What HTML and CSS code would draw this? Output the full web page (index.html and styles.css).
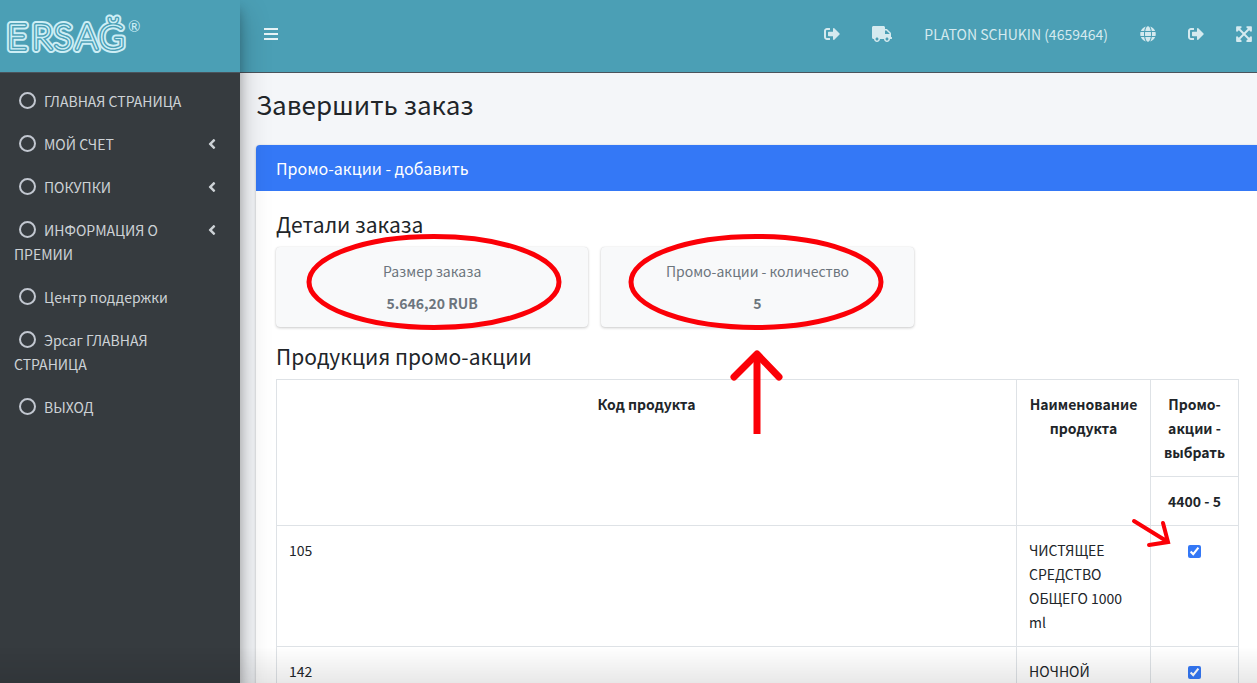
FILE: index.html
```html
<!DOCTYPE html>
<html lang="ru">
<head>
<meta charset="utf-8">
<meta name="viewport" content="width=device-width, initial-scale=1">
<title>Завершить заказ</title>
<link rel="stylesheet" href="styles.css">
</head>
<body>
<svg class="sprite" aria-hidden="true">
  <symbol id="i-exit" viewBox="0 0 512 512"><path d="M497 273L329 441c-15 15-41 4.500-41-17v-96H152c-13.300 0-24-10.700-24-24v-96c0-13.300 10.700-24 24-24h136V88c0-21.400 25.900-32 41-17l168 168c9.300 9.400 9.300 24.600 0 34zM192 436v-40c0-6.600-5.400-12-12-12H96c-17.700 0-32-14.300-32-32V160c0-17.700 14.300-32 32-32h84c6.600 0 12-5.400 12-12V76c0-6.600-5.400-12-12-12H96c-53 0-96 43-96 96v192c0 53 43 96 96 96h84c6.600 0 12-5.400 12-12z"/></symbol>
  <symbol id="i-truck" viewBox="0 0 640 512"><path d="M624 352h-16V243.900c0-12.700-5.100-24.900-14.100-33.900L494 110.100c-9-9-21.200-14.100-33.900-14.100H416V48c0-26.500-21.500-48-48-48H48C21.500 0 0 21.500 0 48v320c0 26.500 21.500 48 48 48h16c0 53 43 96 96 96s96-43 96-96h128c0 53 43 96 96 96s96-43 96-96h48c8.800 0 16-7.200 16-16v-32c0-8.800-7.200-16-16-16zM160 464c-26.500 0-48-21.500-48-48s21.500-48 48-48 48 21.500 48 48-21.500 48-48 48zm320 0c-26.500 0-48-21.500-48-48s21.500-48 48-48 48 21.500 48 48-21.500 48-48 48zm80-208H416V144h44.100l99.900 99.900V256z"/></symbol>
  <symbol id="i-globe" viewBox="0 0 496 512"><path d="M336.500 160C322 70.700 287.800 8 248 8s-74 62.700-88.500 152h177zM152 256c0 22.200 1.200 43.500 3.300 64h185.300c2.100-20.500 3.300-41.800 3.300-64s-1.200-43.500-3.300-64H155.300c-2.100 20.500-3.300 41.800-3.300 64zm324.700-96c-28.600-67.900-86.500-120.400-158-141.600 24.400 33.800 41.200 84.700 50 141.600h108zM177.200 18.400C105.800 39.600 47.800 92.100 19.300 160h108c8.700-56.900 25.500-107.800 49.900-141.600zM487.400 192H372.700c2.100 21 3.300 42.500 3.300 64s-1.200 43-3.300 64h114.600c5.500-20.500 8.600-41.800 8.600-64s-3.100-43.500-8.500-64zM120 256c0-21.500 1.200-43 3.300-64H8.600C3.200 212.500 0 233.800 0 256s3.200 43.500 8.600 64h114.600c-2-21-3.200-42.500-3.200-64zm39.500 96c14.500 89.300 48.700 152 88.500 152s74-62.700 88.500-152h-177zm159.300 141.600c71.400-21.200 129.400-73.700 158-141.600h-108c-8.800 56.900-25.600 107.800-50 141.600zM19.300 352c28.600 67.900 86.500 120.400 158 141.600-24.400-33.800-41.200-84.700-50-141.600h-108z"/></symbol>
  <symbol id="i-expand" viewBox="0 0 448 512"><path d="M448 344v112a24 24 0 0 1-24 24H312c-21.400 0-32.100-25.900-17-41l36.200-36.200L224 295.600 116.800 402.900 153 439c15.100 15.100 4.400 41-17 41H24a24 24 0 0 1-24-24V344c0-21.400 25.900-32.100 41-17l36.200 36.200L184.500 256 77.200 148.700 41 185c-15.100 15.100-41 4.400-41-17V56a24 24 0 0 1 24-24h112c21.400 0 32.100 25.900 17 41l-36.200 36.200L224 216.400l107.200-107.300L295 73c-15.100-15.100-4.400-41 17-41h112a24 24 0 0 1 24 24v112c0 21.400-25.900 32.100-41 17l-36.200-36.200L263.500 256l107.300 107.300L407 327.100c15.100-15.200 41-4.500 41 16.900z"/></symbol>
  <symbol id="i-left" viewBox="0 0 256 512"><path d="M31.700 239l136-136c9.400-9.400 24.600-9.400 33.900 0l22.600 22.600c9.400 9.400 9.400 24.600 0 33.900L127.900 256l96.400 96.400c9.400 9.400 9.400 24.600 0 33.900L201.700 409c-9.400 9.400-24.600 9.400-33.900 0l-136-136c-9.500-9.400-9.500-24.600-.1-34z"/></symbol>
  <symbol id="i-bars" viewBox="0 0 14 14"><path d="M0 1h14v2H0zM0 6h14v2H0zM0 11h14v2H0z"/></symbol>
</svg>
<div class="app">
  <aside class="sidebar">
    <a class="brand" href="#" aria-label="ERSAĞ">
      <svg class="logo" viewBox="0 0 144 60" aria-hidden="true">
        <g class="mark">
          <text class="m-outer" x="7 32 54 76 99" y="49">ERSAĞ</text>
          <text class="m-gap" x="7 32 54 76 99" y="49">ERSAĞ</text>
          <text class="m-core" x="7 32 54 76 99" y="49">ERSAĞ</text>
        </g>
        <text class="m-reg" x="128" y="32">®</text>
      </svg>
    </a>
    <nav class="menu">
      <a href="#"><i class="ring"></i>ГЛАВНАЯ СТРАНИЦА</a>
      <a href="#"><svg class="chev"><use href="#i-left"/></svg><i class="ring"></i>МОЙ СЧЕТ</a>
      <a href="#"><svg class="chev"><use href="#i-left"/></svg><i class="ring"></i>ПОКУПКИ</a>
      <a href="#"><svg class="chev"><use href="#i-left"/></svg><i class="ring"></i>ИНФОРМАЦИЯ О ПРЕМИИ</a>
      <a href="#"><i class="ring"></i>Центр поддержки</a>
      <a href="#"><i class="ring"></i>Эрсаг ГЛАВНАЯ СТРАНИЦА</a>
      <a href="#"><i class="ring"></i>ВЫХОД</a>
    </nav>
  </aside>
  <div class="page">
    <header class="topbar">
      <button class="icon-btn" type="button" aria-label="Меню"><svg class="bars"><use href="#i-bars"/></svg></button>
      <div class="tools">
        <a href="#" aria-label="Выход"><svg class="ic"><use href="#i-exit"/></svg></a>
        <a href="#" aria-label="Доставка"><svg class="ic ic-wide"><use href="#i-truck"/></svg></a>
        <a href="#">PLATON SCHUKIN (4659464)</a>
        <a href="#" aria-label="Язык"><svg class="ic"><use href="#i-globe"/></svg></a>
        <a href="#" aria-label="Выход"><svg class="ic"><use href="#i-exit"/></svg></a>
        <a href="#" aria-label="Во весь экран"><svg class="ic ic-big"><use href="#i-expand"/></svg></a>
      </div>
    </header>
    <main class="content">
      <h1>Завершить заказ</h1>
      <section class="card">
        <h2 class="card-head">Промо-акции - добавить</h2>
        <div class="card-body">
          <h3>Детали заказа</h3>
          <div class="stats">
            <div class="stat">
              <span>Размер заказа</span>
              <strong>5.646,20 RUB</strong>
              <svg class="oval" viewBox="0 0 256 96" aria-hidden="true"><ellipse cx="130" cy="49" rx="125" ry="45.500"/></svg>
            </div>
            <div class="stat">
              <span>Промо-акции - количество</span>
              <strong>5</strong>
              <svg class="oval" viewBox="0 0 256 96" aria-hidden="true"><ellipse cx="127" cy="49" rx="125" ry="45.500"/></svg>
              <svg class="arrow-up" viewBox="0 0 54 86" aria-hidden="true"><path class="head" d="M4 28L27 5l22 23"/><path d="M27 5v80"/></svg>
            </div>
          </div>
          <h3>Продукция промо-акции</h3>
          <table>
            <colgroup><col><col class="c-name"><col class="c-pick"></colgroup>
            <thead>
              <tr><th rowspan="2">Код продукта</th><th rowspan="2">Наименование продукта</th><th>Промо-акции - выбрать</th></tr>
              <tr><th>4400 - 5</th></tr>
            </thead>
            <tbody>
              <tr><td>105</td><td>ЧИСТЯЩЕЕ СРЕДСТВО ОБЩЕГО 1000 ml</td><td class="pick"><input type="checkbox" checked aria-label="Выбрать 105"><svg class="arrow-pick" viewBox="0 0 42 32" aria-hidden="true"><path d="M4 4l34 21M19 28l19-3-5-19"/></svg></td></tr>
              <tr><td>142</td><td>НОЧНОЙ</td><td class="pick"><input type="checkbox" checked aria-label="Выбрать 142"></td></tr>
            </tbody>
          </table>
        </div>
      </section>
    </main>
  </div>
</div>
</body>
</html>
```
FILE: styles.css
```css
* { box-sizing: border-box; }
body {
  margin: 0;
  font: 14px/24px "Noto Sans CJK SC", "Noto Sans", sans-serif;
  color: #212529;
  background: #f4f6f9;
}
h1, h2, h3 { margin: 0; font-weight: 400; }
a { color: inherit; text-decoration: none; }
.sprite { display: none; }
.app { display: flex; height: 100vh; overflow: hidden; }
.app::after {
  content: "";
  position: fixed;
  z-index: 2;
  inset: auto 0 0;
  height: 36px;
  background: linear-gradient(rgba(0, 0, 0, 0), rgba(0, 0, 0, .09));
  pointer-events: none;
}

.sidebar {
  flex: 0 0 240px;
  z-index: 1;
  background: #363b3f;
  color: #cdd2d6;
  box-shadow: 0 14px 28px rgba(0, 0, 0, .25), 0 10px 10px rgba(0, 0, 0, .22);
}
.brand {
  display: block;
  height: 73px;
  background: #4b9fb5;
  border-bottom: 1px solid #4b545c;
}
.logo { display: block; width: 144px; height: 60px; }
.mark { font: 100 34px Lato, sans-serif; stroke-linejoin: round; }
.m-outer { fill: #cdeef5; stroke: #cdeef5; stroke-width: 8px; }
.m-gap { fill: #4b9fb5; stroke: #4b9fb5; stroke-width: 4px; }
.m-core { fill: #cdeef5; stroke: #cdeef5; stroke-width: 1px; }
.m-reg { font: 15px Lato, sans-serif; fill: #cdeef5; }

.menu { display: flex; flex-direction: column; gap: 3px; padding: 8px; }
.menu a { display: block; padding: 8px 16px 8px 6px; }
.ring {
  display: inline-block;
  width: 17px;
  height: 17px;
  margin: 0 8px 0 5px;
  border: 2px solid #c2c7d0;
  border-radius: 50%;
  vertical-align: -2px;
}
.chev { float: right; width: 8px; height: 16px; margin-top: 4px; fill: #cdd2d6; }

.page { flex: 1; min-width: 0; }
.topbar {
  display: flex;
  align-items: center;
  justify-content: space-between;
  height: 73px;
  padding: 0 5px 4px 24px;
  background: #4b9fb5;
  border-bottom: 1px solid #4b545c;
  color: #d5eaef;
}
.icon-btn { padding: 0; border: 0; background: none; line-height: 0; }
.bars { width: 14px; height: 14px; fill: #e6f3f6; }
.tools { display: flex; align-items: center; gap: 32px; }
.tools a { display: flex; }
.ic { width: 16px; height: 16px; fill: #d5eaef; }
.ic-wide { width: 20px; }
.ic-big { height: 18px; }

.content { padding: 14px 0 0 16px; }
h1 { font-size: 26px; line-height: 34px; }
.card {
  margin-top: 24px;
  background: #fff;
  border-radius: 4px 0 0;
  box-shadow: 0 0 1px rgba(0, 0, 0, .13), 0 1px 3px rgba(0, 0, 0, .2);
}
.card-head {
  padding: 11px 20px;
  font-size: 16px;
  line-height: 24px;
  color: #fff;
  background: #3478f6;
  border-radius: 4px 0 0;
}
.card-body { padding: 20px 18px 20px 20px; }
h3 { margin-bottom: 10px; font-size: 21px; line-height: 26px; }
.stats { display: grid; grid-template-columns: repeat(3, 1fr); gap: 13px; margin-bottom: 16px; }
.stat {
  position: relative;
  display: flex;
  flex-direction: column;
  gap: 8px;
  padding: 12px;
  text-align: center;
  color: #6c757d;
  background: #f8f9fa;
  border-radius: 4px;
  box-shadow: 0 0 1px rgba(0, 0, 0, .13), 0 1px 3px rgba(0, 0, 0, .2);
}
.oval, .arrow-up, .arrow-pick { position: absolute; fill: none; stroke: #fb0007; pointer-events: none; }
.oval { left: 50%; top: -14px; width: 256px; height: 96px; margin-left: -128px; stroke-width: 5px; overflow: visible; }
.arrow-up { left: 50%; top: 102px; width: 54px; height: 86px; margin-left: -27px; stroke-width: 7px; }
.head { stroke-linecap: round; stroke-linejoin: round; }

table { width: 100%; table-layout: fixed; border-collapse: collapse; }
.c-name { width: 134px; }
.c-pick { width: 88px; }
th, td { padding: 12px; border: 1px solid #dee2e6; vertical-align: top; text-align: left; }
th { font-weight: 700; text-align: center; }
.pick { position: relative; text-align: center; }
.pick input { width: 13px; height: 13px; margin: 0; accent-color: #3478f6; vertical-align: -2px; }
.arrow-pick { left: -21px; top: -9px; width: 42px; height: 32px; stroke-width: 4px; stroke-linecap: round; }
```
